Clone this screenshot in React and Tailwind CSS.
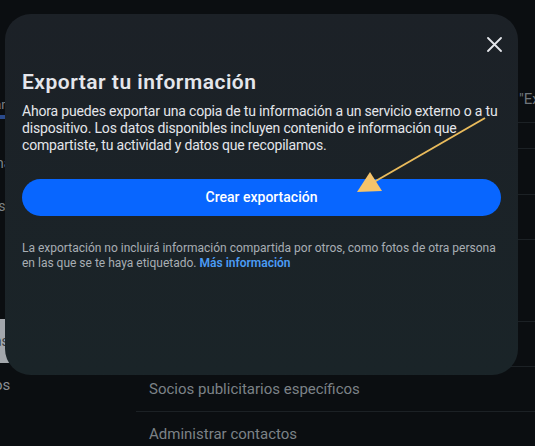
import React from "react";

const font = { fontFamily: "Roboto, 'Noto Sans', sans-serif" };

export default function App() {
  return (
    <div className="relative w-[535px] h-[446px] overflow-hidden bg-[#0b0e11]" style={font}>
      {/* background page */}
      <div className="flex h-full pt-[14px]">
        <div className="w-[136px] shrink-0 flex flex-col overflow-hidden">
          <div className="h-[52px] shrink-0" />
          <div className="-ml-[40px] text-[13px] leading-[12px] text-[#7d8287] whitespace-nowrap">Inicie</div>
          <div className="-ml-[22px] text-[13px] leading-[12px] text-[#7d8287] whitespace-nowrap">Mil.</div>
          <div className="-ml-[14px] mt-[8px] text-[13px] leading-[14px] text-[#7d8287] whitespace-nowrap">Panel</div>
          <div className="mt-[3px] h-[4px] w-[8px] shrink-0 bg-[#2a4a8c]" />
          <div className="-ml-[40px] mt-[36px] text-[14px] leading-[16px] text-[#7d8287] whitespace-nowrap">Personal</div>
          <div className="-ml-[46px] mt-[27px] text-[14px] leading-[16px] text-[#7d8287] whitespace-nowrap">Cuentas</div>
          <div className="mt-[105px] h-[44px] shrink-0 bg-[#a3a7ac] flex items-center -ml-[40px] text-[14px] text-[#3a3d40] whitespace-nowrap">
            Contraseña
          </div>
          <div className="-ml-[53px] mt-[12px] text-[15px] leading-[20px] text-[#8a8f94] whitespace-nowrap">Permisos</div>
        </div>
        <div className="flex-1 flex flex-col">
          <div className="h-[108px] shrink-0 flex items-center justify-start pt-[62px] text-[15px] text-[#6f757b] whitespace-nowrap overflow-hidden">
            <span className="ml-[383px]">"Exportar</span>
          </div>
          <div className="h-[26px] shrink-0 border-t border-[#1c2125]" />
          <div className="h-[46px] shrink-0 border-t border-[#1c2125]" />
          <div className="h-[45px] shrink-0 border-t border-[#1c2125]" />
          <div className="h-[82px] shrink-0 border-t border-[#1c2125]" />
          <div className="h-[45px] shrink-0 border-t border-[#1c2125]" />
          <div className="h-[45px] shrink-0 border-t border-[#1c2125] flex items-center pl-[13px] text-[15px] text-[#7c8287]">
            Socios publicitarios específicos
          </div>
          <div className="h-[45px] shrink-0 border-t border-[#1c2125] flex items-center pl-[13px] text-[15px] text-[#7c8287]">
            Administrar contactos
          </div>
        </div>
      </div>

      {/* modal */}
      <div className="absolute left-[5px] top-[14px] w-[513px] h-[361px] rounded-[26px] bg-gradient-to-b from-[#1c2127] to-[#1a2428] pl-[17px] pr-[17px] pt-[20px]">
        <div className="flex justify-end">
          <button className="w-[20px] h-[20px] -mr-[3px] flex items-center justify-center text-[#e4e6eb]">
            <svg width="15" height="15" viewBox="0 0 15 15" fill="none" stroke="currentColor" strokeWidth="1.8" strokeLinecap="round">
              <path d="M1 1L14 14M14 1L1 14" />
            </svg>
          </button>
        </div>
        <h1 className="mt-[15px] text-[21px] leading-[26px] font-semibold tracking-[0.5px] text-[#e4e6eb]">
          Exportar tu información
        </h1>
        <p className="mt-[8px] text-[14px] leading-[17px] tracking-[-0.18px] whitespace-nowrap text-[#e4e6eb]">
          Ahora puedes exportar una copia de tu información a un servicio externo o a tu<br />
          dispositivo. Los datos disponibles incluyen contenido e información que<br />
          compartiste, tu actividad y datos que recopilamos.
        </p>
        <button className="mt-[25px] w-full h-[37px] rounded-full bg-[#0866ff] text-white text-[14px] font-medium">
          Crear exportación
        </button>
        <p className="mt-[25px] text-[12px] leading-[15px] whitespace-nowrap text-[#a8aeb4]">
          La exportación no incluirá información compartida por otros, como fotos de otra persona<br />
          en las que se te haya etiquetado.{" "}
          <span className="font-semibold text-[#4b9cf5]">Más información</span>
        </p>
      </div>

      {/* annotation arrow */}
      <svg className="absolute left-0 top-0 pointer-events-none" width="535" height="446">
        <line x1="485" y1="118" x2="374" y2="182" stroke="#e9bb5c" strokeWidth="2" />
        <polygon points="357,192 382,191 370,172" fill="#f6c46b" />
      </svg>
    </div>
  );
}
